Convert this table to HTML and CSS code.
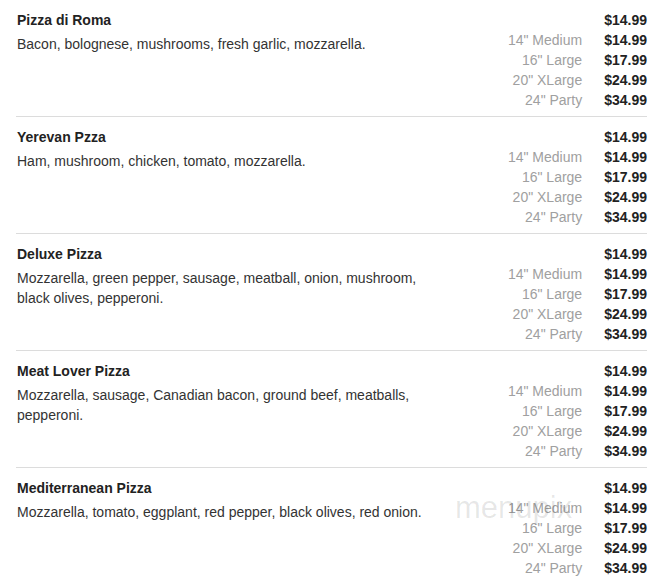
FILE: index.html
```html
<!DOCTYPE html>
<html>
<head>
<meta charset="utf-8">
<link rel="stylesheet" href="styles.css">
</head>
<body>
<div class="menu">
  <div class="item">
    <div class="info">
      <div class="name">Pizza di Roma</div>
      <div class="desc">Bacon, bolognese, mushrooms, fresh garlic, mozzarella.</div>
    </div>
    <div class="prices">
      <span class="label"></span><span class="price">$14.99</span>
      <span class="label">14" Medium</span><span class="price">$14.99</span>
      <span class="label">16" Large</span><span class="price">$17.99</span>
      <span class="label">20" XLarge</span><span class="price">$24.99</span>
      <span class="label">24" Party</span><span class="price">$34.99</span>
    </div>
  </div>
  <div class="item">
    <div class="info">
      <div class="name">Yerevan Pzza</div>
      <div class="desc">Ham, mushroom, chicken, tomato, mozzarella.</div>
    </div>
    <div class="prices">
      <span class="label"></span><span class="price">$14.99</span>
      <span class="label">14" Medium</span><span class="price">$14.99</span>
      <span class="label">16" Large</span><span class="price">$17.99</span>
      <span class="label">20" XLarge</span><span class="price">$24.99</span>
      <span class="label">24" Party</span><span class="price">$34.99</span>
    </div>
  </div>
  <div class="item">
    <div class="info">
      <div class="name">Deluxe Pizza</div>
      <div class="desc">Mozzarella, green pepper, sausage, meatball, onion, mushroom, black olives, pepperoni.</div>
    </div>
    <div class="prices">
      <span class="label"></span><span class="price">$14.99</span>
      <span class="label">14" Medium</span><span class="price">$14.99</span>
      <span class="label">16" Large</span><span class="price">$17.99</span>
      <span class="label">20" XLarge</span><span class="price">$24.99</span>
      <span class="label">24" Party</span><span class="price">$34.99</span>
    </div>
  </div>
  <div class="item">
    <div class="info">
      <div class="name">Meat Lover Pizza</div>
      <div class="desc">Mozzarella, sausage, Canadian bacon, ground beef, meatballs, pepperoni.</div>
    </div>
    <div class="prices">
      <span class="label"></span><span class="price">$14.99</span>
      <span class="label">14" Medium</span><span class="price">$14.99</span>
      <span class="label">16" Large</span><span class="price">$17.99</span>
      <span class="label">20" XLarge</span><span class="price">$24.99</span>
      <span class="label">24" Party</span><span class="price">$34.99</span>
    </div>
  </div>
  <div class="item last">
    <div class="info">
      <div class="name">Mediterranean Pizza</div>
      <div class="desc">Mozzarella, tomato, eggplant, red pepper, black olives, red onion.</div>
    </div>
    <div class="prices">
      <span class="label"></span><span class="price">$14.99</span>
      <span class="label">14" Medium</span><span class="price">$14.99</span>
      <span class="label">16" Large</span><span class="price">$17.99</span>
      <span class="label">20" XLarge</span><span class="price">$24.99</span>
      <span class="label">24" Party</span><span class="price">$34.99</span>
    </div>
    <div class="watermark">menupix</div>
  </div>
</div>
</body>
</html>
```
FILE: styles.css
```css
html, body {
  margin: 0;
  padding: 0;
  background: #fff;
}
body {
  font-family: "Liberation Sans", Arial, sans-serif;
  color: #333;
}
.menu {
  padding: 0 24px 0 16px;
}
.item {
  position: relative;
  display: flex;
  justify-content: space-between;
  padding: 10px 0 6px;
  border-bottom: 1px solid #dcdcdc;
}
.item.last {
  border-bottom: none;
}
.info {
  width: 432px;
}
.name {
  font-size: 14px;
  font-weight: bold;
  line-height: 20px;
  color: #222;
  margin-left: 1px;
}
.desc {
  font-size: 14px;
  line-height: 20px;
  margin-top: 4px;
  color: #333;
  margin-left: 1px;
}
.prices {
  display: grid;
  grid-template-columns: auto auto;
  column-gap: 22px;
  line-height: 20px;
}
.label {
  text-align: right;
  font-size: 14px;
  color: #a0a0a0;
}
.price {
  text-align: right;
  font-size: 14px;
  font-weight: bold;
  color: #222;
}
.watermark {
  position: absolute;
  left: 439px;
  top: 22px;
  font-size: 31px;
  color: rgba(0,0,0,0.1);
  pointer-events: none;
}
```
